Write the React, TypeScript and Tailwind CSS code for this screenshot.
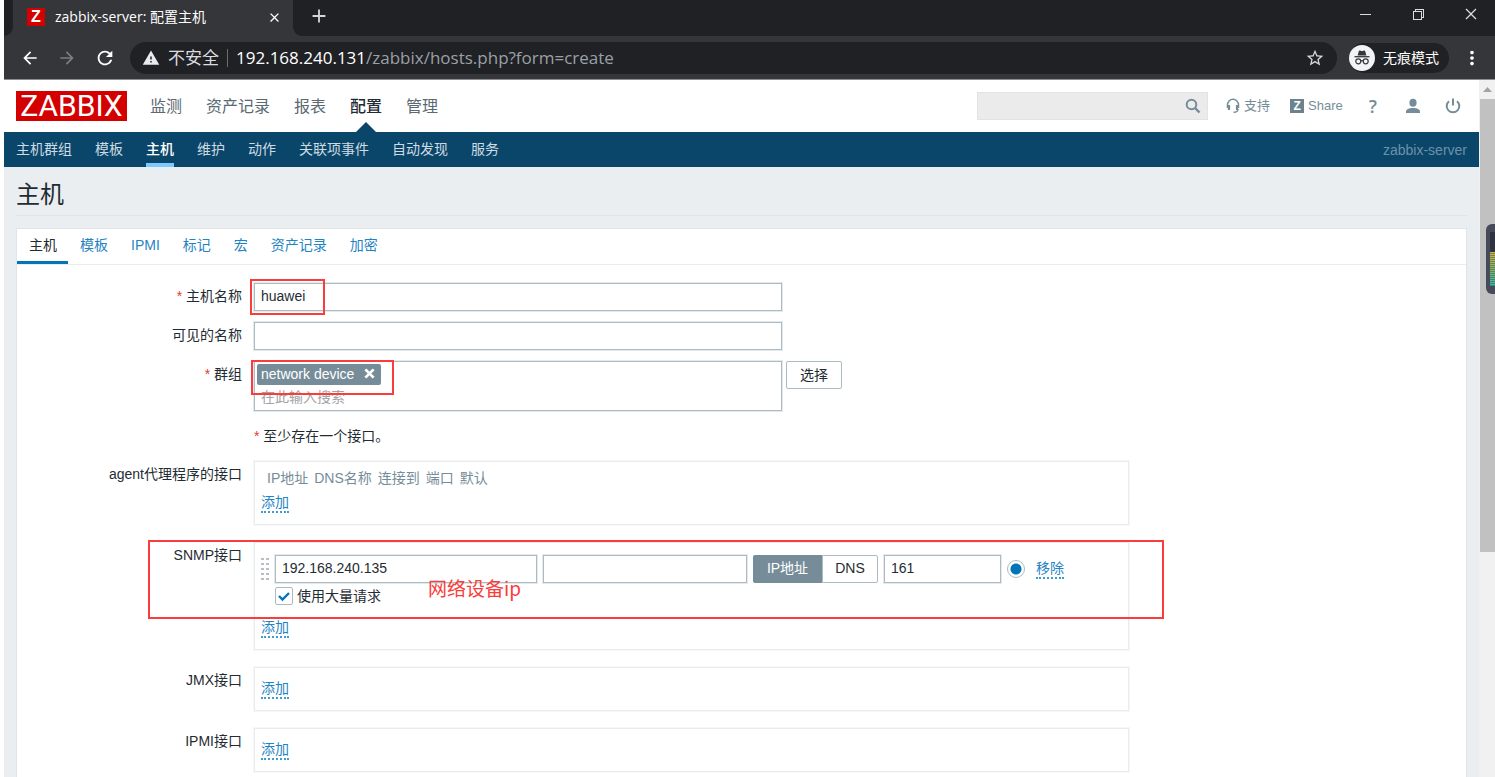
import type React from "react"
import { useState } from "react"
import { MdAdd, MdArrowBack, MdArrowForward, MdClose, MdMoreVert, MdRefresh, MdStarBorder, MdWarning } from "react-icons/md"
import { VscChromeClose, VscChromeMinimize, VscChromeRestore } from "react-icons/vsc"

const mainMenu = ["监测", "资产记录", "报表", "配置", "管理"]
const subMenu = ["主机群组", "模板", "主机", "维护", "动作", "关联项事件", "自动发现", "服务"]
const formTabs = ["主机", "模板", "IPMI", "标记", "宏", "资产记录", "加密"]

const inputClass = "h-7 border border-[#acbbc2] bg-white px-1.5 pb-0.5 text-[#1f2c33] shadow-[0_0_0_1px_#e4eaec] outline-none"

const IncognitoIcon = () => (
  <svg width="26" height="26" viewBox="0 0 26 26" fill="none">
    <circle cx="13" cy="13" r="13" fill="#f1f3f4" />
    <path d="M8.6 10.4 9.8 6.2c.2-.6.7-.8 1.2-.6l2 .6 2-.6c.5-.2 1 0 1.2.6l1.2 4.2z" fill="#35363a" />
    <path d="M5.500 11.700h15" stroke="#35363a" strokeWidth="1.300" />
    <circle cx="9.300" cy="16.300" r="2.500" stroke="#35363a" strokeWidth="1.200" />
    <circle cx="16.700" cy="16.300" r="2.500" stroke="#35363a" strokeWidth="1.200" />
    <path d="M11.800 16c.8-.6 1.600-.6 2.400 0" stroke="#35363a" strokeWidth="1.200" />
  </svg>
)

const SearchIcon = () => (
  <svg width="16" height="16" viewBox="0 0 16 16" fill="none" stroke="#768d99">
    <circle cx="6.500" cy="6.500" r="4.800" strokeWidth="2" />
    <path d="m10 10 4.500 4.500" strokeWidth="2.400" />
  </svg>
)

const HeadsetIcon = () => (
  <svg width="14" height="16" viewBox="0 0 14 16" fill="none" stroke="#768d99">
    <path d="M1.500 10V6.800a5.500 5.500 0 0 1 11 0V10" strokeWidth="1.500" />
    <path d="M3 7v5M11 7v5" strokeWidth="2.200" />
    <path d="M12 11c0 2-1.500 3.300-4.500 3.300" strokeWidth="1.400" />
  </svg>
)

const UserIcon = () => (
  <svg width="16" height="16" viewBox="0 0 16 16" fill="#768d99">
    <ellipse cx="8" cy="4.800" rx="3.600" ry="4" />
    <path d="M1 15v-1.500c0-2.300 3-3.500 7-3.500s7 1.200 7 3.500V15z" />
  </svg>
)

const PowerIcon = () => (
  <svg width="16" height="16" viewBox="0 0 16 16" fill="none" stroke="#768d99" strokeWidth="2">
    <path d="M4 3.200a6.300 6.300 0 1 0 8 0" />
    <path d="M8 .5v7" />
  </svg>
)

const BrowserBar: React.FC = () => (
  <div className="border-b border-[#8b8c8f] bg-[#35363a] font-['Open_Sans','Noto_Sans_CJK_SC',sans-serif] text-white">
    <div className="flex h-9 items-stretch bg-[#202124]">
      <svg className="self-end" width="9" height="9" viewBox="0 0 9 9">
        <path d="M9 0a9 9 0 0 1-9 9h9z" fill="#35363a" />
      </svg>
      <div className="flex w-[280px] items-center bg-[#35363a] pr-[11px] pb-0.5 pl-3.5">
        <span className="flex h-[18px] w-[18px] items-center justify-center bg-[#d40000] font-['Liberation_Sans',sans-serif] text-base leading-4 font-bold">
          Z
        </span>
        <span className="flex-1 pl-2.5 text-sm leading-5 whitespace-nowrap">zabbix-server: 配置主机</span>
        <button type="button" aria-label="Close tab">
          <MdClose size={15} />
        </button>
      </div>
      <svg className="self-end" width="9" height="9" viewBox="0 0 9 9">
        <path d="M0 0a9 9 0 0 0 9 9H0z" fill="#35363a" />
      </svg>
      <button type="button" aria-label="New tab" className="ml-1.5 pb-1 text-[#d5d6d8]">
        <MdAdd size={22} />
      </button>
      <div className="ml-auto flex items-start gap-[37px] pt-1.5 pr-4 text-[#dcdcdc]">
        <button type="button" aria-label="Minimize"><VscChromeMinimize size={16} /></button>
        <button type="button" aria-label="Restore"><VscChromeRestore size={16} /></button>
        <button type="button" aria-label="Close"><VscChromeClose size={16} /></button>
      </div>
    </div>
    <div className="flex h-[43px] items-center pl-4">
      <button type="button" aria-label="Back"><MdArrowBack size={20} /></button>
      <button type="button" aria-label="Forward" className="ml-[17px] text-[#7d7e81]"><MdArrowForward size={20} /></button>
      <button type="button" aria-label="Reload" className="ml-[17px]"><MdRefresh size={22} /></button>
      <div className="ml-3.5 flex h-8 flex-1 items-center rounded-full bg-[#202124] pr-3 pl-3 text-[17px] leading-6">
        <MdWarning size={18} className="text-[#e8eaed]" />
        <span className="ml-2 text-[#dcdde0]">不安全</span>
        <span className="mx-2 h-[18px] w-px bg-[#6b6c6f]" />
        <span className="flex-1 text-[#9aa0a6]">
          <span className="text-white">192.168.240.131</span>/zabbix/hosts.php?form=create
        </span>
        <button type="button" aria-label="Bookmark" className="text-[#d5d6d8]"><MdStarBorder size={20} /></button>
      </div>
      <div className="ml-3 flex h-[30px] items-center gap-2 rounded-full bg-[#202124] pr-2.5 text-sm">
        <IncognitoIcon />
        无痕模式
      </div>
      <button type="button" aria-label="Menu" className="mr-3 ml-3"><MdMoreVert size={22} /></button>
    </div>
  </div>
)

const Header: React.FC = () => (
  <header>
    <div className="flex h-[52px] items-center bg-white pr-2.5 pl-3">
      <a
        href="#"
        className="flex h-[30px] w-[111px] items-center justify-center bg-[#d40000] font-['Roboto',sans-serif] text-[30px] leading-[30px] text-white"
      >
        ZABBIX
      </a>
      <nav className="ml-[23px] flex h-full gap-6 text-base">
        {mainMenu.map((item) => (
          <a
            key={item}
            href="#"
            className={`relative flex items-center pt-0.5 ${item === "配置" ? "font-medium text-[#1f2c33]" : "text-[#5a6972]"}`}
          >
            {item}
            {item === "配置" && (
              <svg className="absolute bottom-0 left-1/2 -translate-x-1/2" width="20" height="10" viewBox="0 0 20 10">
                <path d="M0 10 10 0l10 10z" fill="#0a466a" />
              </svg>
            )}
          </a>
        ))}
      </nav>
      <div className="ml-auto flex items-center text-[#768d99]">
        <div className="flex h-7 w-[231px] items-center border border-[#e3e3e3] bg-[#ebebeb] pr-1.5">
          <input type="text" aria-label="Search" className="h-full min-w-0 flex-1 outline-none" />
          <button type="button" aria-label="Search"><SearchIcon /></button>
        </div>
        <a href="#" className="ml-[18px] flex items-center gap-1 text-[13px]">
          <HeadsetIcon /> 支持
        </a>
        <a href="#" className="ml-5 flex items-center gap-1 text-[13px]">
          <span className="flex h-3.5 w-3.5 items-center justify-center bg-[#6a838f] text-xs leading-3 font-bold text-white">Z</span>
          Share
        </a>
        <a href="#" className="ml-[26px] font-['Open_Sans',sans-serif] text-lg leading-6 font-semibold">?</a>
        <a href="#" aria-label="User" className="ml-7"><UserIcon /></a>
        <a href="#" aria-label="Sign out" className="ml-6 pr-2"><PowerIcon /></a>
      </div>
    </div>
    <nav className="flex h-[35px] items-center gap-[23px] bg-[#0a466a] px-3 text-[#cfdbe2]">
      {subMenu.map((item) => (
        <a
          key={item}
          href="#"
          className={`flex h-full items-center border-b-4 pt-0.5 ${item === "主机" ? "border-[#7cc9ff] font-medium text-white" : "border-transparent"}`}
        >
          {item}
        </a>
      ))}
      <span className="ml-auto text-[#6d92a8]">zabbix-server</span>
    </nav>
  </header>
)

const Row = ({ label, htmlFor, required, children }: { label?: string; htmlFor?: string; required?: boolean; children: React.ReactNode }) => (
  <div className="flex items-start gap-3">
    <label htmlFor={htmlFor} className="w-[225px] shrink-0 text-right leading-[26px]">
      {required && <span className="text-[#e33734]">* </span>}
      {label}
    </label>
    {children}
  </div>
)

const LinkButton = ({ children }: { children: React.ReactNode }) => (
  <button type="button" className="block border-b-2 border-dotted border-[#3f9bd0] leading-[17px] text-[#1f84c4]">
    {children}
  </button>
)

const InterfaceBox = ({ children }: { children: React.ReactNode }) => (
  <div className="w-[875px] border border-[#e8ecee] px-1.5 py-3 shadow-[0_0_0_1px_#f6f8f8]">{children}</div>
)

const HostForm: React.FC = () => {
  const [name, setName] = useState("huawei")
  const [visibleName, setVisibleName] = useState("")
  const [ip, setIp] = useState("192.168.240.135")
  const [dns, setDns] = useState("")
  const [port, setPort] = useState("161")
  const [bulk, setBulk] = useState(true)

  return (
    <form className="flex flex-col gap-[11px] pt-[18px]">
      <Row label="主机名称" htmlFor="name" required>
        <div className="relative">
          <input id="name" type="text" value={name} onChange={(e) => setName(e.target.value)} className={`${inputClass} block w-[528px]`} />
          <div className="pointer-events-none absolute -top-1 -left-1 h-9 w-[75px] border-2 border-[#fa3c3c]" />
        </div>
      </Row>
      <Row label="可见的名称" htmlFor="visible-name">
        <input id="visible-name" type="text" value={visibleName} onChange={(e) => setVisibleName(e.target.value)} className={`${inputClass} w-[528px]`} />
      </Row>
      <Row label="群组" htmlFor="groups" required>
        <div className="flex items-start gap-1">
          <div className="relative h-[50px] w-[528px] border border-[#acbbc2] px-0.5 pt-0.5 shadow-[0_0_0_1px_#e4eaec]">
            <span className="flex h-[21px] w-[124px] items-center justify-between rounded-xs bg-[#768d99] pr-1.5 pb-0.5 pl-1 text-white">
              network device
              <button type="button" aria-label="Remove">
                <svg width="11" height="11" viewBox="0 0 12 12" stroke="#fff" strokeWidth="3">
                  <path d="m1.500 1.500 9 9m0-9-9 9" />
                </svg>
              </button>
            </span>
            <input id="groups" type="text" placeholder="在此输入搜索" className="h-6 w-full px-1 outline-none placeholder:text-[#a3a3a3]" />
            <div className="pointer-events-none absolute -top-0.5 -left-1 h-[35px] w-[143px] border-2 border-[#fa3c3c]" />
          </div>
          <button type="button" className="h-7 w-14 rounded-xs border border-[#acbbc2]">选择</button>
        </div>
      </Row>
      <Row>
        <p className="leading-7">
          <span className="text-[#e33734]">* </span>至少存在一个接口。
        </p>
      </Row>
      <div className="flex flex-col gap-[17px]">
        <Row label="agent代理程序的接口">
          <InterfaceBox>
            <table className="ml-1.5 -mt-1.5 text-[#768d99]">
              <thead>
                <tr className="h-5">
                  {["IP地址", "DNS名称", "连接到", "端口", "默认"].map((head) => (
                    <th key={head} className="p-0 pr-1.5 font-normal">{head}</th>
                  ))}
                </tr>
              </thead>
            </table>
            <div className="mt-1.5 h-[18px]"><LinkButton>添加</LinkButton></div>
          </InterfaceBox>
        </Row>
        <div className="relative">
          <Row label="SNMP接口" htmlFor="snmp-ip">
            <InterfaceBox>
              <div className="flex items-center">
                <svg width="8" height="22" viewBox="0 0 8 22" fill="#b5c1c7" className="mr-1.5">
                  {[0, 5, 10, 15, 20].map((y) => (
                    <path key={y} d={`M0 ${y}h3v2H0zM5 ${y}h3v2H5z`} />
                  ))}
                </svg>
                <input id="snmp-ip" type="text" value={ip} onChange={(e) => setIp(e.target.value)} className={`${inputClass} w-[262px]`} />
                <input type="text" aria-label="DNS名称" value={dns} onChange={(e) => setDns(e.target.value)} className={`${inputClass} ml-1.5 w-[204px]`} />
                <div className="ml-1.5 flex h-7">
                  <button type="button" className="w-[69px] rounded-l-xs bg-[#768d99] pb-0.5 text-white">IP地址</button>
                  <button type="button" className="w-14 rounded-r-xs border border-[#acbbc2] pb-0.5">DNS</button>
                </div>
                <input type="text" aria-label="端口" value={port} onChange={(e) => setPort(e.target.value)} className={`${inputClass} ml-1.5 w-[117px]`} />
                <input
                  type="radio"
                  aria-label="默认"
                  defaultChecked
                  className="ml-1.5 h-[18px] w-[18px] appearance-none rounded-full border border-[#acbbc2] bg-white checked:bg-[radial-gradient(circle,#0275b8_5px,#fff_6px)]"
                />
                <div className="ml-[11px]"><LinkButton>移除</LinkButton></div>
              </div>
              <div className="mt-1 ml-3.5 flex h-[18px] items-center gap-1">
                <span className="relative h-[18px] w-[18px]">
                  <input
                    id="bulk"
                    type="checkbox"
                    checked={bulk}
                    onChange={(e) => setBulk(e.target.checked)}
                    className="block h-[18px] w-[18px] appearance-none rounded-xs border border-[#acbbc2] bg-white"
                  />
                  {bulk && (
                    <svg className="pointer-events-none absolute inset-0" width="18" height="18" viewBox="0 0 18 18" fill="none">
                      <path d="m4 9 3.500 3.500L14 6" stroke="#0275b8" strokeWidth="2.400" />
                    </svg>
                  )}
                </span>
                <label htmlFor="bulk">使用大量请求</label>
              </div>
              <div className="mt-3.5 h-[18px]"><LinkButton>添加</LinkButton></div>
            </InterfaceBox>
          </Row>
          <div className="pointer-events-none absolute -top-0.5 left-[131px] h-[79px] w-[1016px] border-2 border-[#fa3c3c]" />
          <span className="absolute top-8 left-[411px] font-['Noto_Sans_CJK_SC',sans-serif] text-[19px] leading-7 text-[#fa3c3c]">网络设备ip</span>
        </div>
        <Row label="JMX接口">
          <InterfaceBox><div className="h-[18px]"><LinkButton>添加</LinkButton></div></InterfaceBox>
        </Row>
        <Row label="IPMI接口">
          <InterfaceBox><div className="h-[18px]"><LinkButton>添加</LinkButton></div></InterfaceBox>
        </Row>
      </div>
    </form>
  )
}

const ScrollBar: React.FC = () => (
  <div className="relative flex w-4 shrink-0 flex-col bg-[#f1f1f1] pl-px">
    <div className="flex h-[19px] items-center justify-center">
      <svg width="9" height="5" viewBox="0 0 9 5">
        <path d="M0 5 4.500 0 9 5z" fill="#a3a3a3" />
      </svg>
    </div>
    <div className="h-[65%] bg-[#c1c1c1]" />
    {/* level meter docked to the window edge */}
    <div className="absolute top-36 right-0 flex h-[70px] w-[9px] flex-col rounded-l-md bg-[#464a59] py-2 pl-1">
      <div className="h-5 bg-[#2f3340]" />
      <div className="h-[35px] bg-[repeating-linear-gradient(transparent_0_1px,#464a5980_1px_2px),linear-gradient(#d0b23c,#7cb862,#36b8a8)]" />
    </div>
  </div>
)

const App: React.FC = () => {
  return (
    <div className="flex h-screen flex-col overflow-hidden bg-white pl-1">
      <BrowserBar />
      <div className="flex min-h-0 flex-1 font-['Liberation_Sans','Noto_Sans_CJK_SC',sans-serif] text-sm text-[#1f2c33]">
        <div className="flex min-w-0 flex-1 flex-col bg-[#ebeef0]">
          <Header />
          <main className="flex min-h-0 flex-1 flex-col px-3">
            <h1 className="border-b border-[#dfe4e7] pt-2.5 pb-0.5 text-2xl leading-9">主机</h1>
            <div className="mt-3 min-h-0 flex-1 overflow-hidden border border-b-0 border-[#dfe4e7] bg-white">
              <div className="flex h-9 border-b border-[#ebeef0]">
                {formTabs.map((tab, i) => (
                  <button
                    key={tab}
                    type="button"
                    className={`border-b-[3px] pr-[11px] pl-3 ${i === 0 ? "border-[#0275b8]" : "border-transparent text-[#1f84c4]"}`}
                  >
                    {tab}
                  </button>
                ))}
              </div>
              <HostForm />
            </div>
          </main>
        </div>
        <ScrollBar />
      </div>
    </div>
  )
}

export default App
